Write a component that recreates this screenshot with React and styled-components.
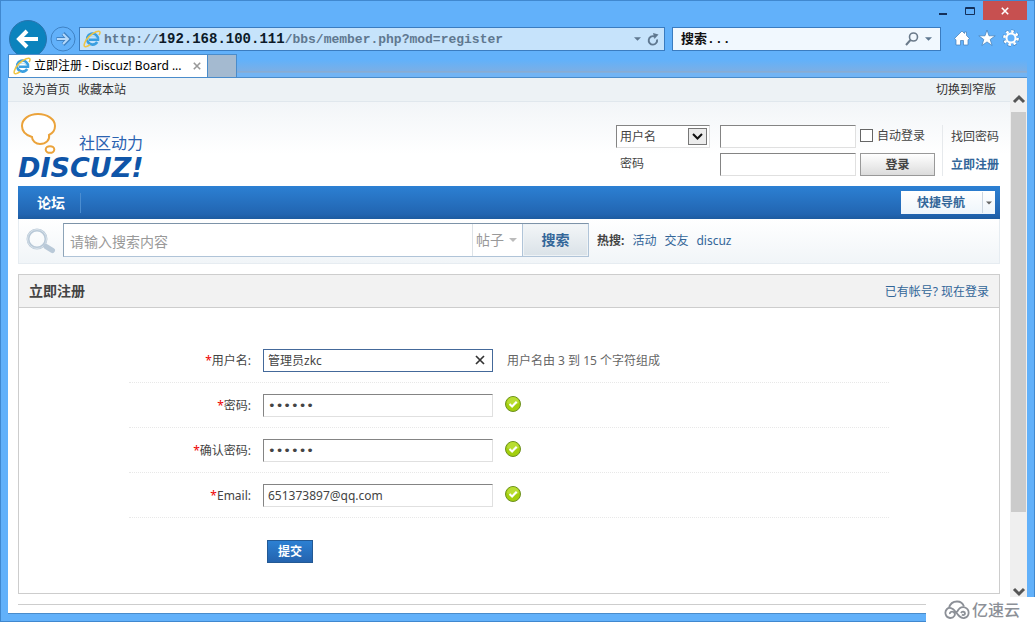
import React from "react";
import styled, { createGlobalStyle, css } from "styled-components";

const sans = `"Noto Sans", "Noto Sans CJK SC", sans-serif`;
const mono = `"Liberation Mono", "Noto Sans CJK SC", monospace`;

const Global = createGlobalStyle`
  *, *::before, *::after { box-sizing: border-box; }
  body { margin: 0; background: #62b1fa; font-family: ${sans}; font-size: 12px; line-height: 16px; color: #444; }
  button, input, select { font: inherit; color: inherit; margin: 0; padding: 0; border: 0; border-radius: 0; background: none; outline: 0; }
  a { color: inherit; text-decoration: none; }
`;

/* ---------- browser window ---------- */
const Frame = styled.div`
  position: relative;
  display: flex;
  flex-direction: column;
  min-height: 100vh;
  padding: 0 7px 7px;
  border: 1px solid #4088cf;
  background: #62b1fa;
`;
const TitleBar = styled.div`
  display: flex;
  justify-content: flex-end;
  height: 19px;
`;
const WindowButton = styled.button`
  display: flex;
  align-items: center;
  justify-content: center;
  width: ${(p) => (p.$close ? 44 : 27)}px;
  height: 19px;
  color: ${(p) => (p.$close ? "#fff" : "#14305a")};
  background: ${(p) => (p.$close ? "#c75050" : "transparent")};
`;
const Toolbar = styled.div`
  display: flex;
  align-items: center;
  height: 34px;
  padding: 0 4px 0 1px;
`;
const RoundButton = styled.button`
  display: block;
  flex: none;
  width: ${(p) => p.$width}px;
  height: 34px;
  margin-right: ${(p) => p.$gap}px;
  svg { display: block; }
`;
const ChromeBox = styled.div`
  display: flex;
  align-items: center;
  height: 24px;
  min-width: 0;
  margin-top: 4px;
  border: 1px solid #3a7cc0;
  background: ${(p) => p.$fill};
`;
const AddressBox = styled(ChromeBox)`
  flex: 576;
  margin-right: 7px;
  padding: 0 3px;
`;
const FindBox = styled(ChromeBox)`
  flex: 254;
  margin-right: 8px;
  padding: 0 4px 0 8px;
`;
const Address = styled.div`
  flex: 1;
  min-width: 0;
  margin-left: 3px;
  overflow: hidden;
  white-space: nowrap;
  font: bold 13px/22px ${mono};
  color: #5f7890;
  outline: 0;
`;
const Host = styled.span`
  font-size: 14px;
  color: #0c1a28;
`;
const FindInput = styled.input`
  flex: 1;
  min-width: 0;
  padding-top: 2px;
  font: bold 13px/20px ${mono};
  color: #111;
`;
const IconButton = styled.button`
  display: flex;
  align-items: center;
  justify-content: center;
  flex: none;
  width: ${(p) => p.$size || 16}px;
  height: ${(p) => p.$size || 16}px;
`;
const ChromeActions = styled.div`
  display: flex;
  align-items: center;
  margin-top: 2px;
`;
const TabStrip = styled.div`
  display: flex;
  align-items: flex-end;
  height: 23px;
  background: linear-gradient(#62b1fa 6px, #7aafe6 17px, #94a9c2 18px, #72b4f4 19px);
`;
const Tab = styled.div`
  display: flex;
  align-items: center;
  width: 200px;
  height: 23px;
  padding: 0 4px;
  border: 1px solid #4a8ccb;
  border-bottom: 0;
  background: #fff;
  color: #000;
  white-space: nowrap;
`;
const TabTitle = styled.span`
  flex: 1;
  margin-left: 3px;
`;
const NewTab = styled.button`
  width: 29px;
  height: 23px;
  border: 1px solid #4a8ccb;
  border-width: 1px 1px 0 0;
  background: #a4bad0;
`;
const Viewport = styled.div`
  display: flex;
  flex: 1;
  border-top: 1px solid #4a8ccb;
  border-bottom: 1px solid #4a8ccb;
  background: #fff;
`;

/* ---------- scroll bar ---------- */
const ScrollBar = styled.div`
  display: flex;
  flex-direction: column;
  width: 17px;
  padding: 0 1px;
  background: #efefef;
`;
const ScrollArrow = styled.button`
  display: flex;
  justify-content: center;
  height: ${(p) => p.$height}px;
  padding-top: ${(p) => p.$top}px;
`;
const Thumb = styled.div`
  flex: 400;
  background: #cbcbcb;
`;
const Track = styled.div`
  flex: 72;
`;

/* ---------- forum page ---------- */
const Page = styled.div`
  flex: 1;
  min-width: 0;
  background: linear-gradient(#f2f5f8 24px, #fff 76px);
`;
const TopLinks = styled.div`
  display: flex;
  gap: 8px;
  height: 24px;
  padding: 4px 14px 3px;
  border-bottom: 1px solid #e0e7ed;
  background: #edf2f5;
  color: #333;
`;
const Spacer = styled.span`
  flex: 1;
`;
const Content = styled.div`
  padding: 0 10px;
`;
const Header = styled.header`
  display: flex;
  justify-content: space-between;
  align-items: flex-start;
  height: 84px;
`;
const LogoLink = styled.a`
  display: block;
  margin-top: 10px;
  svg { display: block; }
`;
const Login = styled.form`
  display: flex;
  margin-top: 23px;
`;
const LoginFields = styled.div`
  display: grid;
  grid-template-columns: 94px 136px 69px;
  grid-auto-rows: 23px;
  gap: 5px 10px;
  align-items: center;
  & > :nth-child(3n) { margin-left: -6px; }
`;
const sunken = css`
  border: 1px solid;
  border-color: #848484 #e0e0e0 #e0e0e0 #848484;
  background: #fff;
`;
const TextInput = styled.input`
  ${sunken}
  width: 100%;
  height: 23px;
  padding: 0 4px;
`;
const SelectBox = styled.span`
  ${sunken}
  display: flex;
  align-items: center;
  position: relative;
  height: 23px;
  select {
    flex: 1;
    height: 21px;
    padding-left: 3px;
    appearance: none;
  }
`;
const SelectArrow = styled.span`
  position: absolute;
  right: 2px;
  top: 2px;
  display: flex;
  align-items: center;
  justify-content: center;
  width: 19px;
  height: 17px;
  border: 1px solid #777;
  background: #ececec;
  pointer-events: none;
`;
const PasswordLabel = styled.label`
  padding: 0 0 2px 4px;
`;
const Remember = styled.label`
  display: flex;
  align-items: center;
  gap: 4px;
  padding-bottom: 2px;
  white-space: nowrap;
  input {
    width: 13px;
    height: 13px;
    border: 1px solid #666;
    background: #fff;
    appearance: none;
  }
`;
const LoginButton = styled.button`
  height: 23px;
  border: 1px solid #999;
  background: linear-gradient(#fff, #dcdcdc);
  font-weight: bold;
`;
const LoginLinks = styled.div`
  display: flex;
  flex-direction: column;
  gap: 12px;
  margin-left: 7px;
  padding: 4px 1px 0 8px;
  border-left: 1px solid #e6e9ec;
`;
const BlueLink = styled.a`
  color: #369;
  font-weight: ${(p) => (p.$bold ? "bold" : "normal")};
`;
const Nav = styled.nav`
  display: flex;
  align-items: center;
  justify-content: space-between;
  height: 33px;
  padding-right: 5px;
  background: linear-gradient(#2c80d3, #2265b1 85%, #1d5ba0);
`;
const NavLink = styled.a`
  padding: 0 15px 0 19px;
  border-right: 1px solid #4b8dd0;
  color: #fff;
  font-size: 14px;
  font-weight: bold;
  line-height: 20px;
`;
const QuickNav = styled.button`
  display: flex;
  align-items: center;
  height: 23px;
  padding-left: 16px;
  background: linear-gradient(#fff, #eef5fb);
  color: #369;
  font-weight: bold;
`;
const QuickCaret = styled.span`
  display: flex;
  align-items: center;
  justify-content: center;
  width: 13px;
  height: 21px;
  margin-left: 17px;
  border-left: 1px solid #ccd6e0;
`;
const SearchBar = styled.form`
  display: flex;
  align-items: center;
  height: 45px;
  padding-left: 6px;
  border: 1px solid #e6ecf1;
  border-top: 0;
  background: linear-gradient(#fff, #f1f5f8);
  svg { flex: none; }
`;
const SearchFields = styled.div`
  display: flex;
  flex: 0 1 526px;
  min-width: 0;
  height: 34px;
  margin: 0 8px 2px 7px;
  border: 1px solid #b0c4d8;
  border-top-color: #7d93a8;
  border-left-color: #8ea4b8;
  background: #fff;
  color: #999;
`;
const Keyword = styled.input`
  flex: 1;
  min-width: 0;
  padding: 4px 6px 0;
  font-size: 14px;
  &::placeholder { color: #999; opacity: 1; }
`;
const ScopeBox = styled.span`
  display: flex;
  align-items: center;
  width: 50px;
  padding: 0 5px 0 3px;
  border-left: 1px solid #dde3e8;
  select {
    flex: 1;
    min-width: 0;
    font-size: 14px;
    appearance: none;
  }
`;
const SearchButton = styled.button`
  width: 66px;
  border-left: 1px solid #b0c4d8;
  background: linear-gradient(#f3f6f8, #dae2e8);
  box-shadow: inset 0 0 0 1px #eef3f6;
  color: #369;
  font-size: 14px;
  font-weight: bold;
`;
const HotWords = styled.div`
  display: flex;
  gap: 8px;
  white-space: nowrap;
`;
const Panel = styled.section`
  margin-top: 10px;
  border: 1px solid #cdcdcd;
`;
const PanelHead = styled.div`
  display: flex;
  align-items: center;
  justify-content: space-between;
  height: 33px;
  padding: 0 10px;
  border-bottom: 1px solid #cdcdcd;
  background: #f2f2f2;
  ${BlueLink} { padding-top: 2px; }
`;
const Heading = styled.h3`
  margin: 0;
  font-size: 14px;
  line-height: 20px;
`;
const RegisterForm = styled.form`
  padding: 30px 110px;
`;
const Row = styled.div`
  display: grid;
  grid-template-columns: 122px 230px 1fr;
  align-items: center;
  column-gap: 12px;
  height: 45px;
  border-bottom: 1px dotted #e8e8e8;
`;
const FieldLabel = styled.label`
  padding-top: 2px;
  text-align: right;
`;
const Required = styled.span`
  color: #e00;
`;
const FieldBox = styled.span`
  display: flex;
  align-items: center;
  height: 23px;
  ${sunken}
  ${(p) => p.$active && css`border-color: #44699a;`}
  input {
    flex: 1;
    min-width: 0;
    height: 21px;
    padding: 0 4px;
  }
  input[type="password"] {
    font-family: "DejaVu Sans", sans-serif;
    font-size: 13px;
  }
`;
const Hint = styled.span`
  padding: ${(p) => (p.$text ? "2px 0 0 2px" : "0 0 3px")};
  color: #666;
  svg { display: block; }
`;
const SubmitRow = styled.div`
  padding: 22px 0 0 138px;
`;
const SubmitButton = styled.button`
  display: block;
  width: 46px;
  height: 23px;
  border: 1px solid #235994;
  background: linear-gradient(#2c80d3, #2463ae);
  color: #fff;
  font-weight: bold;
`;
const Footer = styled.footer`
  margin-top: 10px;
  border-top: 1px solid #cdcdcd;
`;
const Watermark = styled.div`
  position: absolute;
  right: -1px;
  bottom: -1px;
  display: flex;
  align-items: center;
  gap: 2px;
  width: 109px;
  height: 25px;
  padding-left: 18px;
  background: #fff;
  color: #8c9097;
  font-size: 16px;
  line-height: 24px;
  font-weight: 500;
`;

/* ---------- drawings ---------- */
const Caret = ({ color = "#5f7890", w = 8 }) => (
  <svg width={w} height="4" viewBox="0 0 8 4" aria-hidden="true"><path d="M0 0h8L4 4z" fill={color} /></svg>
);
const IeIcon = () => (
  <svg width="18" height="18" viewBox="0 0 18 18" fill="none" aria-hidden="true">
    <path d="M14.200 12A5.500 5.500 0 1 1 15 9.700H6" stroke="#3a9fe0" strokeWidth="2.600" />
    <path d="M5 8.400C6 5.600 12 5.400 13.600 8.400" stroke="#a5daf7" strokeWidth="1" />
    <path d="M3.400 16.600C-.6 18 1 11.500 6 6.600 11 1.800 16.600-.2 17 2.200c.1 1-.4 2-1 3M3.400 16.600c1.400-.3 2.600-1.200 3.600-1.900" stroke="#efc544" strokeWidth="1.500" />
  </svg>
);
const Chevron = ({ up }) => (
  <svg width="14" height="10" viewBox="0 0 14 10" fill="none" aria-hidden="true">
    <path d={up ? "M2 8l5-5 5 5" : "M2 2l5 5 5-5"} stroke="#555" strokeWidth="3" />
  </svg>
);
const Cross = ({ size, color, width }) => (
  <svg width={size} height={size} viewBox="0 0 10 10" aria-hidden="true">
    <path d="M1 1l8 8M9 1L1 9" stroke={color} strokeWidth={width} />
  </svg>
);
const CheckIcon = () => (
  <svg width="16" height="16" viewBox="0 0 16 16" role="img" aria-label="正确">
    <circle cx="8" cy="8" r="7.500" fill="#a3cf0e" stroke="#6d9020" />
    <path d="M2 7a6 6 0 0 1 12 0c-3 2-8 2-12 0z" fill="#b8dd32" />
    <path d="M4.500 8l2.600 2.500 4.600-4.700" fill="none" stroke="#fff" strokeWidth="2.200" />
  </svg>
);
const Logo = () => (
  <svg width="136" height="74" viewBox="0 0 136 74" aria-label="Discuz! 社区动力">
    <g fill="#fff" stroke="#eba33b" strokeWidth="2">
      <path d="M14 25C7 23 4 19 4 14 4 7 11 2 20 2s17 5 17 12c0 4-2 7-6 9 1 5-3 9-9 9-4 0-8-3-8-7z" />
      <ellipse cx="32" cy="37.500" rx="4.300" ry="3.300" />
    </g>
    <text x="61" y="37" fill="#2a62b0" fontFamily="Noto Sans CJK SC" fontSize="16">社区动力</text>
    <text x="0" y="65" fill="#0f55a8" fontFamily="DejaVu Sans" fontSize="27" fontWeight="bold" fontStyle="italic">DISCUZ!</text>
  </svg>
);

const FIELDS = [
  { id: "username", label: "用户名", value: "管理员zkc", active: true },
  { id: "password", label: "密码", value: "123456", type: "password" },
  { id: "password2", label: "确认密码", value: "123456", type: "password" },
  { id: "email", label: "Email", value: "651373897@qq.com" },
];

const Field = ({ id, label, value, type = "text", active }) => (
  <Row>
    <FieldLabel htmlFor={id}><Required>*</Required>{label}:</FieldLabel>
    <FieldBox $active={active}>
      <input id={id} type={type} defaultValue={value} />
      {active && (
        <IconButton type="button" aria-label="清除" $size={24}><Cross size={10} color="#333" width={1.7} /></IconButton>
      )}
    </FieldBox>
    <Hint $text={active}>{active ? "用户名由 3 到 15 个字符组成" : <CheckIcon />}</Hint>
  </Row>
);

const BrowserChrome = () => (
  <>
    <TitleBar>
      <WindowButton aria-label="最小化"><svg width="8" height="10"><path d="M0 8h8" stroke="currentColor" strokeWidth="2" /></svg></WindowButton>
      <WindowButton aria-label="最大化"><svg width="10" height="8"><path d="M.5.5h9v7h-9zM0 1.500h10" fill="none" stroke="currentColor" /></svg></WindowButton>
      <WindowButton aria-label="关闭" $close><Cross size={8} color="#fff" width={2} /></WindowButton>
    </TitleBar>
    <Toolbar>
      <RoundButton aria-label="后退" $width={38} $gap={3}>
        <svg width="38" height="34" viewBox="0 0 38 34">
          <circle cx="19" cy="19" r="18.500" fill="#0b83bd" stroke="#2a73ad" />
          <path d="M29 19H11M18 11l-8 8 8 8" fill="none" stroke="#fff" strokeWidth="4" />
        </svg>
      </RoundButton>
      <RoundButton aria-label="前进" $width={26} $gap={3}>
        <svg width="26" height="34" viewBox="0 0 26 34" fill="none">
          <circle cx="13" cy="19" r="12" stroke="#3f82c4" />
          <path d="M6.500 19h11M13 13.500l5.500 5.500-5.500 5.500" stroke="#3f82c4" strokeWidth="4" />
          <path d="M7 19h11M13 14l5 5-5 5" stroke="#b5d9fb" strokeWidth="2" />
        </svg>
      </RoundButton>
      <AddressBox $fill="#c6e3fb">
        <IeIcon />
        <Address role="textbox" aria-label="地址" contentEditable suppressContentEditableWarning spellCheck={false}>
          http://<Host>192.168.100.111</Host>/bbs/member.php?mod=register
        </Address>
        <IconButton aria-label="显示地址列表"><Caret w={7} /></IconButton>
        <IconButton aria-label="刷新">
          <svg width="12" height="13" viewBox="0 0 12 13" fill="none"><path d="M10 6.500A4.200 4.200 0 1 1 7.500 3.500" stroke="#5f7890" strokeWidth="1.900" /><path d="M6 0l5.500 1.500L7.500 6z" fill="#5f7890" /></svg>
        </IconButton>
      </AddressBox>
      <FindBox $fill="#f1f8fe">
        <FindInput aria-label="搜索" defaultValue="搜索..." />
        <IconButton aria-label="开始搜索">
          <svg width="14" height="14" viewBox="0 0 14 14" fill="none" stroke="#6a7a8a"><circle cx="8.500" cy="5" r="4" strokeWidth="1.600" /><path d="M5.500 8L1 13" strokeWidth="2" /></svg>
        </IconButton>
        <IconButton aria-label="搜索选项"><Caret w={7} /></IconButton>
      </FindBox>
      <ChromeActions>
        <IconButton aria-label="主页" $size={25}>
          <svg width="16" height="16" viewBox="0 0 16 16"><path d="M8 1L.5 8.500 2 9.800V15h4.500v-4.500h3V15H14V9.800l1.500-1.300L12.500 5.500V2h-2v1.500z" fill="#fff" stroke="#3f7db8" strokeWidth=".7" /></svg>
        </IconButton>
        <IconButton aria-label="收藏夹" $size={25}>
          <svg width="18" height="18" viewBox="0 0 18 18"><path d="M9 1l2 5.800h6.200l-5 3.700 1.900 6L9 12.900l-5.100 3.600 1.900-6-5-3.700H7z" fill="#fff" stroke="#3f7db8" strokeWidth=".7" /></svg>
        </IconButton>
        <IconButton aria-label="工具" $size={24}>
          <svg width="18" height="18" viewBox="0 0 18 18" fill="none">
            <circle cx="9" cy="9" r="6.800" stroke="#3f7db8" strokeWidth="3.400" strokeDasharray="3 2.340" />
            <circle cx="9" cy="9" r="6.600" stroke="#fff" strokeWidth="2.600" strokeDasharray="2.600 2.580" />
            <circle cx="9" cy="9" r="4.500" stroke="#fff" strokeWidth="2" />
          </svg>
        </IconButton>
      </ChromeActions>
    </Toolbar>
    <TabStrip>
      <Tab>
        <IeIcon />
        <TabTitle>立即注册 - Discuz! Board ...</TabTitle>
        <IconButton aria-label="关闭标签页" $size={12}><Cross size={8} color="#999" width={2} /></IconButton>
      </Tab>
      <NewTab aria-label="新建标签页" />
    </TabStrip>
  </>
);

export default function App() {
  return (
    <Frame>
      <Global />
      <BrowserChrome />
      <Viewport>
        <Page>
          <TopLinks>
            <a href="#home">设为首页</a>
            <a href="#fav">收藏本站</a>
            <Spacer />
            <a href="#narrow">切换到窄版</a>
          </TopLinks>
          <Content>
            <Header>
              <LogoLink href="#forum"><Logo /></LogoLink>
              <Login onSubmit={(e) => e.preventDefault()}>
                <LoginFields>
                  <SelectBox>
                    <select aria-label="登录方式"><option>用户名</option><option>Email</option></select>
                    <SelectArrow><svg width="11" height="7" viewBox="0 0 11 7"><path d="M1 1l4.500 4.500L10 1" fill="none" stroke="#111" strokeWidth="2" /></svg></SelectArrow>
                  </SelectBox>
                  <TextInput aria-label="用户名" />
                  <Remember><input type="checkbox" />自动登录</Remember>
                  <PasswordLabel htmlFor="login-password">密码</PasswordLabel>
                  <TextInput id="login-password" type="password" />
                  <LoginButton>登录</LoginButton>
                </LoginFields>
                <LoginLinks>
                  <a href="#lost">找回密码</a>
                  <BlueLink href="#register" $bold>立即注册</BlueLink>
                </LoginLinks>
              </Login>
            </Header>
            <Nav>
              <NavLink href="#forum">论坛</NavLink>
              <QuickNav>快捷导航<QuickCaret><Caret w={6} color="#666" /></QuickCaret></QuickNav>
            </Nav>
            <SearchBar onSubmit={(e) => e.preventDefault()}>
              <svg width="31" height="28" viewBox="0 0 31 28" fill="none" aria-hidden="true">
                <circle cx="12" cy="12" r="9" stroke="#b9c9d8" strokeWidth="3" />
                <circle cx="12" cy="12" r="9.500" stroke="#d8e2ea" />
                <path d="M19 18l3 2" stroke="#b9c9d8" strokeWidth="3" />
                <path d="M21 19.500l6.500 4" stroke="#b9c9d8" strokeWidth="5" strokeLinecap="round" />
              </svg>
              <SearchFields>
                <Keyword aria-label="搜索内容" placeholder="请输入搜索内容" />
                <ScopeBox>
                  <select aria-label="搜索范围"><option>帖子</option><option>用户</option></select>
                  <Caret w={8} color="#bbb" />
                </ScopeBox>
                <SearchButton>搜索</SearchButton>
              </SearchFields>
              <HotWords>
                <strong>热搜:</strong>
                <BlueLink href="#activity">活动</BlueLink>
                <BlueLink href="#friends">交友</BlueLink>
                <BlueLink href="#discuz">discuz</BlueLink>
              </HotWords>
            </SearchBar>
            <Panel>
              <PanelHead>
                <Heading>立即注册</Heading>
                <BlueLink href="#login">已有帐号? 现在登录</BlueLink>
              </PanelHead>
              <RegisterForm onSubmit={(e) => e.preventDefault()}>
                {FIELDS.map((f) => <Field key={f.id} {...f} />)}
                <SubmitRow><SubmitButton>提交</SubmitButton></SubmitRow>
              </RegisterForm>
            </Panel>
            <Footer />
          </Content>
        </Page>
        <ScrollBar>
          <ScrollArrow aria-label="向上滚动" $height={34} $top={16}><Chevron up /></ScrollArrow>
          <Thumb />
          <Track />
          <ScrollArrow aria-label="向下滚动" $height={29} $top={3}><Chevron /></ScrollArrow>
        </ScrollBar>
      </Viewport>
      <Watermark>
        <svg width="26" height="20" viewBox="0 0 26 20" fill="none" stroke="#8c9097" strokeWidth="1.800" aria-hidden="true">
          <path d="M5 8C6 4 9 1.500 13 1.500c3.500 0 6 2 7 5" />
          <path d="M13 12c2-4 5-5.500 8-4.500 5 2 5 9.500-1 10.500-4 .5-6-3-9-7C9 8 5 7 3 9c-3 3-1.500 8.500 3 9 4 .3 6.500-4 3.500-6-2-1-4 .5-3.500 2" />
          <path d="M17 13c1-2 4-1.500 4 .5 0 1.500-2 2-3 1" />
        </svg>
        亿速云
      </Watermark>
    </Frame>
  );
}
